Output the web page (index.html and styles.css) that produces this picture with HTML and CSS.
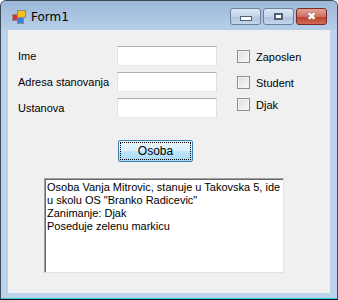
FILE: index.html
```html
<!DOCTYPE html>
<html lang="en">
<head>
<meta charset="UTF-8">
<title>Form1</title>
<link rel="stylesheet" href="styles.css">
</head>
<body>
<div class="window">
  <div class="titlebar">
    <svg class="app-icon" width="14" height="14" viewBox="0 0 14 14">
      <rect x="0.5" y="4.5" width="5" height="6" fill="#d8322a" stroke="#8a8a8a"/>
      <rect x="5.5" y="0.5" width="8" height="7" fill="#f4c01e" stroke="#8a8a8a"/>
      <rect x="5.5" y="7.5" width="6" height="6" fill="#3a7ddb" stroke="#8a8a8a"/>
    </svg>
    <span class="title">Form1</span>
    <div class="caption-buttons">
      <div class="cap-btn"><span class="glyph-min"></span></div>
      <div class="cap-btn"><span class="glyph-max"></span></div>
      <div class="cap-btn close"><span class="glyph-close">&#10006;</span></div>
    </div>
  </div>
  <div class="client">
    <div class="top-area">
      <div class="fields">
        <div class="field-row"><label>Ime</label><div class="textbox"></div></div>
        <div class="field-row"><label>Adresa stanovanja</label><div class="textbox"></div></div>
        <div class="field-row"><label>Ustanova</label><div class="textbox"></div></div>
      </div>
      <div class="checks">
        <div class="check-row first"><span class="checkbox"></span>Zaposlen</div>
        <div class="check-row"><span class="checkbox"></span>Student</div>
        <div class="check-row"><span class="checkbox"></span>Djak</div>
      </div>
    </div>
    <div class="button-row">
      <div class="button"><span class="focus">Osoba</span></div>
    </div>
    <div class="output">Osoba Vanja Mitrovic, stanuje u Takovska 5, ide<br>u skolu OS "Branko Radicevic"<br>Zanimanje: Djak<br>Poseduje zelenu markicu</div>
  </div>
</div>
</body>
</html>
```

FILE: styles.css
```css
body {
  margin: 0;
  background: #ffffff;
  font-family: "Liberation Sans", Arial, sans-serif;
}

.window {
  width: 336px;
  height: 298px;
  border: 1px solid #3c4a5a;
  border-bottom-color: #1a1a1a;
  border-radius: 6px 6px 0 0;
  background: #bcd4eb;
  display: flex;
  flex-direction: column;
  box-shadow: inset 0 -1px 0 #39c6d8;
}

.titlebar {
  height: 29px;
  display: flex;
  align-items: center;
  padding-left: 11px;
  border-radius: 5px 5px 0 0;
  background: linear-gradient(#9db8d8, #b6cfe9);
}

.app-icon {
  margin-top: 2px;
}

.title {
  margin-left: 5px;
  margin-top: 2px;
  font-family: "DejaVu Sans", sans-serif;
  font-size: 12px;
  color: #000;
}

.caption-buttons {
  margin-left: auto;
  margin-right: 10px;
  display: flex;
  gap: 2px;
  margin-top: 2px;
}

.cap-btn {
  width: 29px;
  height: 15px;
  border: 1px solid #6d819b;
  border-radius: 3px;
  background: linear-gradient(#dbe6f3 0%, #c3d4e8 50%, #aec3dd 51%, #c4d6ec 100%);
  display: flex;
  align-items: center;
  justify-content: center;
}

.cap-btn.close {
  border-color: #7a2a22;
  background: linear-gradient(#e2a496 0%, #cf7062 50%, #b8402e 51%, #d06c52 100%);
}

.glyph-min {
  width: 10px;
  height: 3px;
  margin-top: 4px;
  background: #fff;
  border: 1px solid #4e5f76;
}

.glyph-max {
  width: 7px;
  height: 5px;
  background: #fff;
  border: 1px solid #4e5f76;
  box-shadow: inset 0 0 0 1px #4e5f76, inset 0 0 0 2px #fff;
}

.glyph-close {
  color: #fff;
  font-size: 11px;
  line-height: 11px;
  font-family: "DejaVu Sans", sans-serif;
  text-shadow: 0 0 1px #5a1a12;
}

.client {
  margin: 0 7px 0 7px;
  height: 263px;
  background: #f0f0f0;
  font-size: 11px;
  color: #000;
}

.top-area {
  display: flex;
  padding-top: 16px;
}

.fields {
  display: flex;
  flex-direction: column;
  gap: 6px;
  padding-left: 10px;
}

.field-row {
  display: flex;
  align-items: center;
  height: 20px;
}

.field-row label {
  width: 99px;
}

.textbox {
  width: 98px;
  height: 18px;
  background: #fff;
  border: 1px solid #abadb3;
  border-color: #abadb3 #dbdfe6 #e3e9ef #e2e3ea;
}

.checks {
  padding-left: 20px;
  padding-top: 4px;
}

.check-row {
  display: flex;
  align-items: center;
  height: 13px;
  margin-bottom: 13px;
}

.check-row + .check-row {
  margin-bottom: 9px;
}

.checkbox {
  width: 11px;
  height: 11px;
  border: 1px solid #8e8f8f;
  background: linear-gradient(135deg, #dcdcdc, #fbfbfb);
  box-shadow: inset 0 0 0 1px #f4f4f4;
  margin-right: 6px;
}

.button-row {
  padding: 20px 0 0 110px;
}

.button {
  width: 71px;
  height: 18px;
  border: 1px solid #3c7fb1;
  border-radius: 2px;
  background: linear-gradient(#eaf6fd 0%, #d9f0fc 50%, #bee6fd 51%, #a7d9f5 100%);
  display: flex;
  padding: 1px;
  box-sizing: content-box;
}

.focus {
  flex: 1;
  border: 1px dotted #000;
  display: flex;
  align-items: center;
  justify-content: center;
  font-size: 12px;
}

.output {
  margin: 16px 0 0 36px;
  width: 234px;
  height: 89px;
  padding: 2px 2px 2px 2px;
  background: #fff;
  border: 1px solid;
  border-color: #a0a0a0 #e3e3e3 #e3e3e3 #a0a0a0;
  box-shadow: inset 1px 1px 0 #696969;
  line-height: 13px;
}
```
